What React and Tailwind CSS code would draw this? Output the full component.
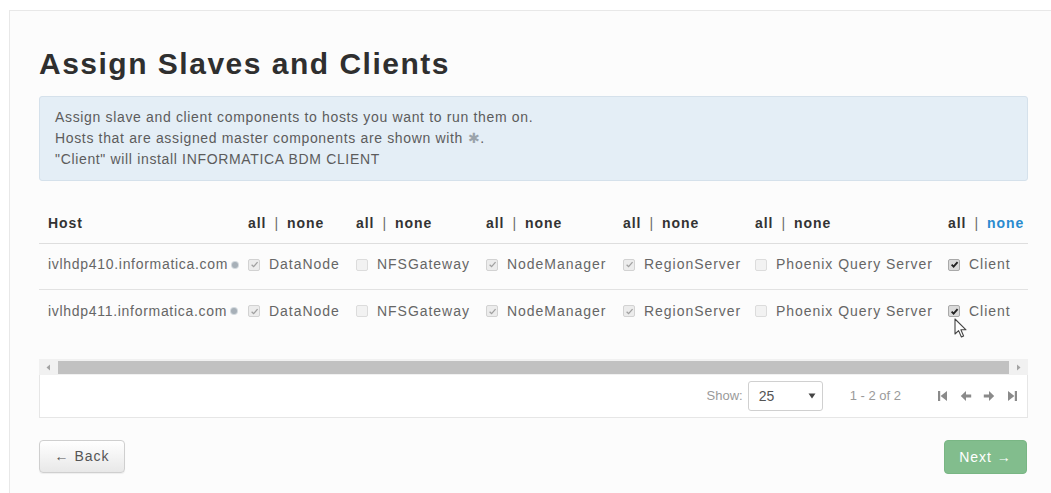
import React from "react";

const COLUMNS = ["DataNode", "NFSGateway", "NodeManager", "RegionServer", "Phoenix Query Server", "Client"];

const HOSTS = [
  { name: "ivlhdp410.informatica.com", checked: [true, false, true, true, false, true] },
  { name: "ivlhdp411.informatica.com", checked: [true, false, true, true, false, true], cursor: true },
];

function CheckBox({ checked, enabled }) {
  const box = enabled
    ? "border-[#a9a9a9] bg-[#dadada]"
    : checked
    ? "border-[#d2d2d2] bg-[#ececec]"
    : "border-[#dcdcdc] bg-[#f2f2f2]";
  return (
    <span className={`inline-flex w-[12px] h-[12px] shrink-0 items-center justify-center rounded-[2px] border ${box}`}>
      {checked && (
        <svg width="9" height="9" viewBox="0 0 10 10">
          <path
            d="M1.8 5.2 L4 7.4 L8.4 2.4"
            fill="none"
            stroke={enabled ? "#222" : "#a0a0a0"}
            strokeWidth={enabled ? 2 : 1.4}
          />
        </svg>
      )}
    </span>
  );
}

function AllNone({ active }) {
  return (
    <span className="font-bold text-[#333] whitespace-nowrap">
      all
      <span className="mx-[8px] font-normal text-[#6a6a6a]">|</span>
      <span className={active ? "text-[#2a8bcf]" : ""}>none</span>
    </span>
  );
}

function Cursor() {
  return (
    <svg className="absolute left-[6px] top-[17px]" width="14" height="21" viewBox="0 0 14 21">
      <path
        d="M1 1 L1 16 L4.6 12.6 L7.4 19 L9.6 18 L6.9 11.8 L12 11.8 Z"
        fill="#fff"
        stroke="#444"
        strokeWidth="1.1"
        strokeLinejoin="round"
      />
    </svg>
  );
}

function PagerIcon({ kind }) {
  const paths = {
    first: "M1 1h2.2v10H1z M10 1v10L3.6 6z",
    prev: "M0.8 6L6 1v3.4h5.2v3.2H6V11z",
    next: "M11.2 6L6 1v3.4H0.8v3.2H6V11z",
    last: "M8.8 1H11v10H8.8z M2 1v10l6.4-5z",
  };
  return (
    <svg width="12" height="12" viewBox="0 0 12 12">
      <path d={paths[kind]} fill="#8a8a8a" />
    </svg>
  );
}

const GRID = "grid grid-cols-[209px_108px_130px_137px_132px_193px_80px]";

export default function App() {
  return (
    <div className="h-[493px] w-[1051px] overflow-hidden bg-white font-['Liberation_Sans',Arial,sans-serif] tracking-[0.06em]">
      <div className="ml-[9px] mt-[10px] w-[1042px] h-[500px] border-l border-t border-[#e8e8e8] bg-[#fcfcfc] pl-[29px] pt-[36px]">
        <div className="w-[989px]">
          <h2 className="text-[30px] leading-[33px] font-bold text-[#2f2f2f] tracking-[0.05em]">
            Assign Slaves and Clients
          </h2>

          <div className="mt-[16px] h-[85px] rounded-[3px] border border-[#d5e1eb] bg-[#e4eef6] px-[15px] pt-[10px] text-[14px] leading-[21px] tracking-[0.047em] text-[#5c5c5c]">
            <p>Assign slave and client components to hosts you want to run them on.</p>
            <p>
              Hosts that are assigned master components are shown with{" "}
              <span className="text-[#9aa3ab]">✱</span>.
            </p>
            <p>"Client" will install INFORMATICA BDM CLIENT</p>
          </div>

          <div className="mt-[23px] text-[14px]">
            <div className={`${GRID} h-[40px] items-center border-b border-[#dedede]`}>
              <span className="pl-[9px] font-bold text-[#333]">Host</span>
              {COLUMNS.map((c, i) => (
                <AllNone key={c} active={i === COLUMNS.length - 1} />
              ))}
            </div>
            {HOSTS.map((h, r) => (
              <div
                key={h.name}
                className={`${GRID} h-[46px] items-center pb-[4px] text-[#666] ${r === 0 ? "border-b border-[#e2e2e2]" : ""}`}
              >
                <span className="flex items-center pl-[9px] whitespace-nowrap tracking-[0.05em]">
                  {h.name}
                  <span className="ml-[4px] w-[6px] h-[6px] rounded-full bg-[#a7b0b8] ring-1 ring-[#d3d9de]" />
                </span>
                {COLUMNS.map((c, i) => {
                  const last = i === COLUMNS.length - 1;
                  return (
                    <span key={c} className="relative flex items-center gap-[9px] whitespace-nowrap">
                      <CheckBox checked={h.checked[i]} enabled={last} />
                      {c}
                      {last && h.cursor && <Cursor />}
                    </span>
                  );
                })}
              </div>
            ))}
          </div>

          {/* horizontal scroller under the table */}
          <div className="mt-[23px] flex h-[16px] items-center bg-[#f1f1f1]">
            <span className="flex w-[19px] justify-center">
              <svg width="5" height="7" viewBox="0 0 5 7"><path d="M4 0.5v6L0.5 3.5z" fill="#a3a3a3" /></svg>
            </span>
            <span className="h-[13px] flex-1 bg-[#c1c1c1]" />
            <span className="flex w-[19px] justify-center">
              <svg width="5" height="7" viewBox="0 0 5 7"><path d="M1 0.5v6L4.5 3.5z" fill="#a3a3a3" /></svg>
            </span>
          </div>

          <div className="flex h-[43px] items-center justify-end border-x border-b border-[#e6e6e6] bg-white pr-[9px] text-[13px] tracking-normal text-[#9a9a9a]">
            <span>Show:</span>
            <span className="ml-[5px] flex h-[30px] w-[75px] items-center justify-between rounded-[3px] border border-[#d0d0d0] bg-white pl-[10px] pr-[6px] text-[14px] text-[#555]">
              25
              <svg width="8" height="6" viewBox="0 0 8 6"><path d="M0.5 0.5h7L4 5.5z" fill="#444" /></svg>
            </span>
            <span className="ml-[27px] mr-[36px]">1 - 2 of 2</span>
            <span className="flex items-center gap-[11px]">
              <PagerIcon kind="first" />
              <PagerIcon kind="prev" />
              <PagerIcon kind="next" />
              <PagerIcon kind="last" />
            </span>
          </div>

          <div className="mt-[22px] flex items-start justify-between">
            <button className="h-[33px] w-[86px] rounded-[4px] border border-[#cfcfcf] bg-gradient-to-b from-white to-[#e8e8e8] text-[14px] text-[#555] shadow-[0_1px_1px_rgba(0,0,0,0.06)]">
              ← Back
            </button>
            <button className="mr-[1px] h-[34px] w-[83px] rounded-[4px] border border-[#79b684] bg-[#82bd8d] text-[14px] text-white">
              Next →
            </button>
          </div>
        </div>
      </div>
    </div>
  );
}
